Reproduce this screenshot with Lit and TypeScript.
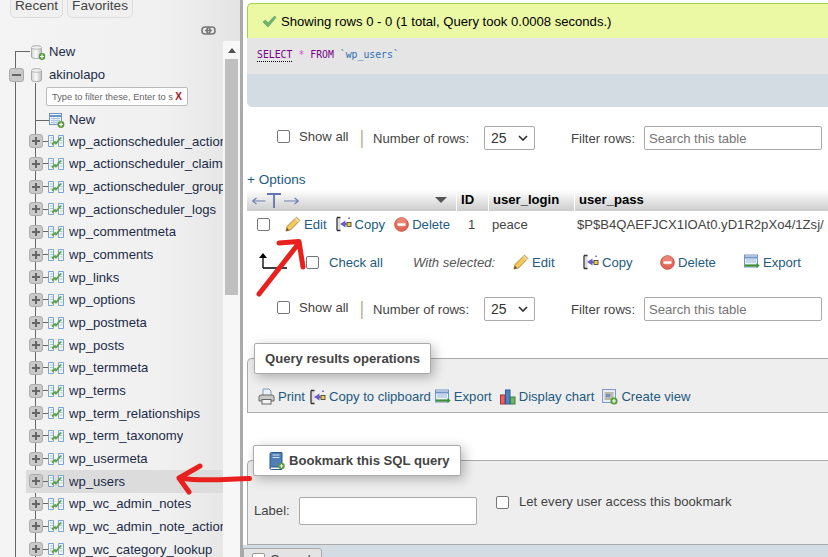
import { LitElement, html, css } from "lit";
import { customElement } from "lit/decorators.js";

const TABLES = [
  "wp_actionscheduler_actions", "wp_actionscheduler_claims", "wp_actionscheduler_groups",
  "wp_actionscheduler_logs", "wp_commentmeta", "wp_comments", "wp_links", "wp_options",
  "wp_postmeta", "wp_posts", "wp_termmeta", "wp_terms", "wp_term_relationships",
  "wp_term_taxonomy", "wp_usermeta", "wp_users", "wp_wc_admin_notes",
  "wp_wc_admin_note_actions", "wp_wc_category_lookup",
];

const db = (add = false) => html`<svg width="16" height="16" viewBox="0 0 16 16"><defs><linearGradient id="dbg"><stop offset="0" stop-color="#d4d4d4"/><stop offset=".45" stop-color="#fbfbfb"/><stop offset="1" stop-color="#bcbcbc"/></linearGradient></defs><path d="M1.500 3.500C1.500 1.500 11.500 1.500 11.500 3.500V13C11.500 15 1.500 15 1.500 13Z" fill="url(#dbg)" stroke="#aaa"/><ellipse cx="6.500" cy="3.500" rx="5" ry="1.800" fill="#f2f2f2" stroke="#b5b5b5"/>${add ? html`<svg x="8.500" y="9" width="7" height="7" viewBox="0 0 7 7"><circle cx="3.500" cy="3.500" r="3.400" fill="#5a9a3c"/><path d="M3.500 1.500v4M1.500 3.500h4" stroke="#fff" stroke-width="1.200"/></svg>` : ""}</svg>`;

const tableNew = () => html`<svg width="16" height="16" viewBox="0 0 16 16"><rect x=".5" y="1.500" width="12" height="11" fill="#eef3fa" stroke="#6e94c8"/><path d="M.5 4h12" stroke="#6e94c8" stroke-width="2"/><path d="M2 6.500h9M2 8.500h9M2 10.500h9" stroke="#a9bddb"/><path d="M5 5v7M8.500 5v7" stroke="#c3d2e8"/><circle cx="12" cy="12.500" r="3.400" fill="#5a9a3c"/><path d="M12 10.500v4M10 12.500h4" stroke="#fff" stroke-width="1.200"/></svg>`;

const tableIcon = () => html`<svg width="16" height="14" viewBox="0 0 16 14"><path d="M.5 1.500h5v11h-5Z" fill="#f4f8fd" stroke="#7aa3d6"/><path d="M10.500 1.500h5v11h-5Z" fill="#f4f8fd" stroke="#7aa3d6"/><path d="M2 4h3M2 6.500h3M2 9h3M12 4h2.500M12 6.500h2.500M12 9h2.500" stroke="#a9c9b0"/><path d="M4 10.500l3-2.500 1 1.500 5-6" fill="none" stroke="#5b9f48" stroke-width="1.800"/></svg>`;

const pencil = () => html`<svg width="16" height="16" viewBox="0 0 16 16"><path d="M1 15l1-4.500L11.500 1.200l3.300 3.300L5.500 14Z" fill="#f3c95a" stroke="#b07c2a" stroke-width=".9"/><path d="M10.500 2.200l3.300 3.300" stroke="#e9e2c8" stroke-width="1.500"/><path d="M1 15l1-3 2 2Z" fill="#5c4630"/></svg>`;

const copy = () => html`<svg width="16" height="16" viewBox="0 0 16 16"><rect x="1.500" y="2" width="3" height="12" fill="#ddd"/><path d="M1 1.500h3.500M1 1.500v13M1 14.500h3.500" fill="none" stroke="#333" stroke-width="1.300"/><path d="M9.500 4.500v7L4 8Z" fill="#6a5acd"/><rect x="7" y="7" width="3.500" height="2.200" fill="#6a5acd"/><rect x="11" y="6.500" width="4" height="4" fill="#f5d33c" stroke="#333" stroke-width=".8"/><rect x="12.300" y="1.500" width="1.500" height="1.500" fill="#5a55c8"/></svg>`;

const del = () => html`<svg width="15" height="15" viewBox="0 0 15 15"><circle cx="7.500" cy="7.500" r="6.800" fill="#e2675a" stroke="#c9523f"/><circle cx="7.500" cy="5.500" r="5" fill="#f09a8c" opacity=".55"/><rect x="3.500" y="6.300" width="8" height="2.500" fill="#fff"/></svg>`;

const exportIcon = () => html`<svg width="16" height="16" viewBox="0 0 16 16"><rect x=".5" y="1" width="13" height="12" fill="#eef3fa" stroke="#6e94c8"/><path d="M.5 3.500h13" stroke="#6e94c8" stroke-width="2"/><path d="M2 6h10M2 8h10" stroke="#9db7d8"/><path d="M1 11.500h12" stroke="#3f8f37" stroke-width="2.200"/><path d="M12.500 9l3.300 2.500-3.300 2.500Z" fill="#3f8f37"/></svg>`;

const printIcon = () => html`<svg width="17" height="17" viewBox="0 0 17 17"><path d="M5 1h6l2 2v6H5Z" fill="#eaf1fb" stroke="#7d9cc5"/><path d="M1 9q0-2 2-2h11q2 0 2 2v4H1Z" fill="#c9c9c9" stroke="#666"/><rect x="4" y="11.500" width="9" height="4.500" fill="#f4f4f4" stroke="#666"/></svg>`;

const chart = () => html`<svg width="16" height="16" viewBox="0 0 16 16"><rect x=".5" y="6" width="4.500" height="9" fill="#e8615e" stroke="#a33"/><rect x="5.500" y="1" width="4.500" height="14" fill="#4f81c9" stroke="#2e5a9c"/><rect x="10.500" y="8" width="4.500" height="7" fill="#6cb66a" stroke="#3d7f3b"/></svg>`;

const viewIcon = () => html`<svg width="16" height="16" viewBox="0 0 16 16"><rect x=".5" y=".5" width="13" height="13" fill="#e7edf6" stroke="#7d9cc5"/><rect x="2.500" y="3" width="9" height="8" fill="#b9b9a9"/><rect x="4" y="5" width="4" height="3" fill="#6f8fbf"/><circle cx="12" cy="12" r="3.600" fill="#5a9a3c"/><path d="M12 10v4M10 12h4" stroke="#fff" stroke-width="1.200"/></svg>`;

const bookmark = () => html`<svg width="16" height="18" viewBox="0 0 16 18"><path d="M1 2q0-1.500 1.500-1.500H13V15H2.500Q1 15 1 16.500Z" fill="#4f7fb5" stroke="#2f5b8c"/><path d="M3.500 3h7M3.500 5.500h7" stroke="#cfe0f2"/><path d="M1 16.500q0 1 1.500 1H13" fill="none" stroke="#2f5b8c"/><circle cx="12.500" cy="14" r="3.300" fill="#5a9a3c"/><path d="M12.500 12.200v3.600M10.700 14h3.600" stroke="#fff"/></svg>`;

const check = () => html`<svg width="15" height="13" viewBox="0 0 15 13"><path d="M1 7l2.500-2 2.500 3L12.500 1 14 2.500 6 12Z" fill="#6cb36c" stroke="#5b9e5b" stroke-width=".6"/></svg>`;

@customElement("app-root")
export class AppRoot extends LitElement {
  static styles = css`
    :host { display: block; width: 828px; height: 557px; overflow: hidden; position: relative;
      font-family: "Liberation Sans", Arial, sans-serif; font-size: 13.100px; color: #444; background: #fff; }
    * { box-sizing: border-box; }
    .page { display: flex; height: 557px; }
    .side { width: 240px; flex: none; display: flex; flex-direction: column; overflow: hidden;
      background: linear-gradient(90deg, #f4f4f4, #f0f0f0 70%, #e4e4e4); color: #1b2b47; }
    .split { width: 3px; flex: none; background: #aaa; }
    .main { width: 585px; flex: none; padding-left: 4px; display: flex; flex-direction: column; position: relative; overflow: hidden; }
    .main > * { flex: none; }

    .tabs { display: flex; gap: 4px; height: 18px; padding-left: 10px; align-items: flex-end; flex: none; }
    .tab { height: 24px; border: 1px solid #ddd; border-radius: 0 0 5px 5px; padding: 0 4px 6px; line-height: 11px;
      background: #f0f0f0; color: #444; font-size: 13.600px; display: flex; align-items: flex-end; }
    .chain { height: 23px; display: flex; justify-content: flex-end; padding: 8px 24px 0 0; flex: none; }
    .tree { flex: 1; display: flex; min-height: 0; }
    .list { width: 223px; position: relative; flex: none; }
    .list::before { content: ""; position: absolute; left: 15px; top: 10px; bottom: 0; width: 1px; background: #666; }
    .list::after { content: ""; position: absolute; left: 35px; top: 42px; bottom: 0; width: 1px; background: #666; }
    .scroll { width: 17px; background: #f7f7f7; position: relative; padding: 0 2px; flex: none; }
    .scroll .up { width: 0; height: 0; margin: 7px auto 0; border: 4px solid transparent; border-top: 0; border-bottom: 5px solid #505050; }
    .scroll .thumb { width: 13px; height: 236px; background: #bfbfbf; margin-top: 6px; }
    .root-row { height: 23px; display: flex; align-items: center; position: relative; padding-left: 30px; gap: 3px; z-index: 1; margin-top: -1px; margin-bottom: 1px; }
    .root-row .link { position: absolute; left: 15px; width: 15px; top: 11px; height: 1px; background: #666; }
    .box { position: absolute; left: 9px; top: 5px; width: 15px; height: 14px; border-radius: 3px; background: #c9c9c9; border: 1px solid #aaa; }
    .box::before { content: ""; position: absolute; left: 2px; right: 2px; top: 5px; height: 2px; background: #666; }
    .filter-row { height: 22px; padding-left: 46px; position: relative; z-index: 1; }
    .filter { width: 142px; height: 19px; background: #fff; border: 1px solid #bbb; border-radius: 2px; display: flex;
      align-items: center; justify-content: space-between; padding: 0 5px; font-size: 9.300px; color: #666; white-space: nowrap; }
    .filter b { color: #a11; font-size: 10px; }
    .new-row { height: 21px; display: flex; align-items: center; padding-left: 49px; gap: 4px; position: relative; z-index: 1; }
    .new-row .link { position: absolute; left: 35px; width: 14px; top: 11px; height: 1px; background: #666; }
    .row { height: 22.670px; display: flex; align-items: center; padding-left: 3px; margin-left: 26px; gap: 5px; position: relative; z-index: 1; white-space: nowrap; overflow: hidden; }
    .row.on { background: #dcdcdc; }
    .row span.t { overflow: hidden; }
    .exp { width: 14px; height: 14px; flex: none; border-radius: 3px; background: #c9c9c9; border: 1px solid #adadad; position: relative; }
    .exp::before { content: ""; position: absolute; left: 2px; right: 2px; top: 5px; height: 2px; background: #666; }
    .exp::after { content: ""; position: absolute; top: 2px; bottom: 2px; left: 5px; width: 2px; background: #666; }
    .dash { width: 5px; height: 1px; background: #666; flex: none; margin: 0 -5px; }
    .row svg { flex: none; }

    .ok { margin-top: 3px; height: 35px; background: #ebf8a4; border: 1px solid #a2d246; border-bottom: 0; border-right: 0;
      border-radius: 5px 0 0 0; display: flex; align-items: center; padding-left: 14px; gap: 4px; color: #000; }
    .sql { height: 36px; background: #e5e5e5; padding: 11px 0 0 10px; font-family: "DejaVu Sans Mono", "Liberation Mono", monospace; font-size: 9.800px; }
    .kw { color: #770088; }
    .kw.u { border-bottom: 1px dotted #000; padding-bottom: 1px; }
    .star { color: #d34fc9; margin: 0 6px; }
    .tick { color: #2f6fb5; }
    .sqlbar { height: 33px; background: #d3dce3; border-radius: 0 0 0 5px; }

    .nav { height: 24px; display: flex; align-items: center; padding-left: 30px; position: relative; }
    .nav.a { margin-top: 19px; }
    .nav.b { margin-top: 22px; }
    .cb { width: 13px; height: 13px; flex: none; border: 1px solid #767676; border-radius: 2px; background: #fff; }
    .nav .cb { margin-top: -3px; }
    .nav .showall { margin: -4px 0 0 9px; width: 62px; }
    .nav .sep { width: 2px; height: 18px; flex: none; background: linear-gradient(90deg, #eab676 50%, #b5cfe8 50%); margin-top: 2px; margin-right: 10px; }
    .nav .rows { width: 111px; }
    .sel { width: 51px; height: 24px; border: 1px solid #aaa; border-radius: 2px; background: #fff; display: flex; align-items: center; justify-content: space-between; padding: 0 6px; color: #333; font-size: 14px; }
    .nav .flt { margin-left: 36px; width: 73px; }
    .search { width: 178px; height: 24px; border: 1px solid #aaa; border-radius: 2px; padding-left: 4px; display: flex; align-items: center; color: #757575; }

    .opts { margin-top: 21px; height: 17px; line-height: 17px; color: #235a81; font-size: 13.600px; }
    .thead, .tbody { display: grid; grid-template-columns: 209px 32px 86px 1fr; }
    .thead { margin-top: 2px; height: 21px; background: linear-gradient(#fff, #ccc); color: #000; font-weight: bold; font-size: 13.100px; line-height: 20px; }
    .thead > div { border-left: 1px solid #fff; padding-left: 4px; }
    .thead > div:first-child { border: 0; padding: 0; position: relative; }
    .tbody { height: 26px; align-items: center; color: #444; }
    .tbody > div { padding-left: 4px; }
    .tbody > div:nth-child(2) { padding-left: 12px; }
    .tbody > div:nth-child(4) { padding-left: 3px; white-space: nowrap; }
    .acts { display: flex; align-items: center; padding-left: 10px !important; }
    .act { display: inline-flex; align-items: center; gap: 3px; color: #235a81; white-space: nowrap; }
    .acts .cb { margin-right: 15px; }
    .acts .act { margin-right: 9px; }
    .arrows { padding: 3px 0 0 5px; }
    .arrows svg { display: block; }
    .tri { position: absolute; left: 188px; top: 7px; width: 0; height: 0; border: 6px solid transparent; border-top: 6px solid #555; border-bottom: 0; }

    .bulk { margin-top: 12px; height: 26px; display: flex; align-items: center; position: relative; white-space: nowrap; }
    .bulk .cb { margin-left: 59px; }
    .bulk .ca { margin-left: 10px; width: 84px; color: #235a81; }
    .bulk i { width: 100px; color: #555; }
    .bulk .m1 { width: 70px; }
    .bulk .m2 { width: 77px; }
    .bulk .m3 { width: 84px; }

    .fs { background: #eee; border: 1px solid #aaa; border-right: 0; border-radius: 5px 0 0 0; position: relative; }
    .fs.q { margin-top: 37px; height: 55px; padding: 22px 0 0 10px; display: flex; align-items: center; white-space: nowrap; }
    .legend { position: absolute; background: #fff; border: 1px solid #aaa; box-shadow: 3px 3px 12px rgba(0,0,0,.28); border-radius: 2px; font-weight: bold; color: #444; display: flex; align-items: center; white-space: nowrap; }
    .fs.q .legend { left: 6px; top: -16px; width: 177px; height: 31px; padding-left: 10px; }
    .fs.k { margin-top: 47px; height: 85px; }
    .fs.k .legend { left: 5px; top: -16px; width: 208px; height: 31px; padding-left: 15px; gap: 4px; }
    .form { display: flex; padding: 36px 0 0 6px; }
    .form label { width: 45px; padding-top: 6px; }
    .input { width: 178px; height: 28px; background: #fff; border: 1px solid #aaa; border-radius: 2px; }
    .form .cb { margin: -1px 10px 0 19px; }
    .form .every { margin-top: -3px; }
    .console { height: 12px; background: #d3dce3; margin-left: -4px; padding-top: 3px; overflow: hidden; }
    .console div { width: 79px; height: 20px; background: #e4e4e4; border: 1px solid #aaa; border-radius: 0 3px 0 0; padding: 4px 0 0 8px; display: flex; gap: 5px; line-height: 13px; }
    .console .cb { border-color: #999; }

    .ml5 { margin-left: 5px; }
    .ml4 { margin-left: 4px; }
    .ml8 { margin-left: 8px; }
    .ink { position: absolute; inset: 0; pointer-events: none; z-index: 5; }
  `;

  private nav(cls: string) {
    return html`<div class="nav ${cls}">
      <div class="cb"></div><div class="showall">Show all</div><div class="sep"></div>
      <div class="rows">Number of rows:</div>
      <div class="sel">25 <svg width="10" height="6" viewBox="0 0 10 6"><path d="M1 1l4 4 4-4" fill="none" stroke="#333" stroke-width="1.700"/></svg></div>
      <div class="flt">Filter rows:</div>
      <div class="search">Search this table</div>
    </div>`;
  }

  render() {
    return html`<div class="page">
      <aside class="side">
        <div class="tabs"><div class="tab">Recent</div><div class="tab">Favorites</div></div>
        <div class="chain"><svg width="15" height="9" viewBox="0 0 15 9"><rect x="1" y="1" width="8" height="7" rx="3" fill="none" stroke="#777" stroke-width="1.600"/><rect x="6" y="1" width="8" height="7" rx="3" fill="none" stroke="#777" stroke-width="1.600"/><path d="M4 4.500h7" stroke="#777" stroke-width="1.400"/></svg></div>
        <div class="tree">
          <div class="list">
            <div class="root-row"><div class="link"></div>${db(true)}<span>New</span></div>
            <div class="root-row"><div class="box"></div>${db()}<span>akinolapo</span></div>
            <div class="filter-row"><div class="filter"><span>Type to filter these, Enter to s</span><b>X</b></div></div>
            <div class="new-row"><div class="link"></div>${tableNew()}<span>New</span></div>
            ${TABLES.map(t => html`<div class="row ${t === "wp_users" ? "on" : ""}"><div class="exp"></div><div class="dash"></div>${tableIcon()}<span class="t">${t}</span></div>`)}
          </div>
          <div class="scroll"><div class="up"></div><div class="thumb"></div></div>
        </div>
      </aside>
      <div class="split"></div>
      <main class="main">
        <div class="ok">${check()}<span>Showing rows 0 - 0 (1 total, Query took 0.0008 seconds.)</span></div>
        <div class="sql"><span class="kw u">SELECT</span><span class="star">*</span><span class="kw">FROM</span> <span class="tick">\`wp_users\`</span></div>
        <div class="sqlbar"></div>
        ${this.nav("a")}
        <div class="opts">+ Options</div>
        <div class="thead">
          <div><div class="arrows"><svg width="47" height="15" viewBox="0 0 47 15"><path d="M0.500 8h13M0.500 8l4-3M0.500 8l4 3M32 8h14M46.500 8l-4-3M46.500 8l-4 3" fill="none" stroke="#6b7fb5" stroke-width="1.200"/><path d="M15 1h14M22 1v14" stroke="#5f75b0" stroke-width="1.800" fill="none"/></svg></div><div class="tri"></div></div>
          <div>ID</div><div>user_login</div><div>user_pass</div>
        </div>
        <div class="tbody">
          <div class="acts"><div class="cb"></div>
            <span class="act">${pencil()}Edit</span><span class="act">${copy()}Copy</span><span class="act">${del()}Delete</span></div>
          <div>1</div><div>peace</div><div>$P$B4QAEFJCX1IOAt0.yD1R2pXo4/1Zsj/</div>
        </div>
        <div class="bulk">
          <div class="cb"></div><div class="ca">Check all</div><i>With selected:</i>
          <span class="act m1">${pencil()}Edit</span><span class="act m2">${copy()}Copy</span><span class="act m3">${del()}Delete</span><span class="act">${exportIcon()}Export</span>
        </div>
        ${this.nav("b")}
        <div class="fs q">
          <div class="legend">Query results operations</div>
          <span class="act">${printIcon()}Print</span><span class="act ml5">${copy()}Copy to clipboard</span><span class="act ml4">${exportIcon()}Export</span><span class="act ml8">${chart()}Display chart</span><span class="act ml8">${viewIcon()}Create view</span>
        </div>
        <div class="fs k">
          <div class="legend">${bookmark()}Bookmark this SQL query</div>
          <div class="form"><label>Label:</label><div class="input"></div><div class="cb"></div><span class="every">Let every user access this bookmark</span></div>
        </div>
        <div class="console"><div><span class="cb"></span>Console</div></div>
      </main>
    </div>
    <svg class="ink" width="828" height="557" viewBox="0 0 828 557">
      <path d="M263 268V256M263 268H287" fill="none" stroke="#000" stroke-width="1.300"/><path d="M259 258l4-5 4 5Z" fill="#000"/>
      <path d="M259 294L299 243M279 243L299 241.500L303 267" fill="none" stroke="#e8211f" stroke-width="5" stroke-linecap="round" stroke-linejoin="round"/>
      <path d="M249.500 478.500C225 479 205 482 179 478M200 466L179 478L189 492" fill="none" stroke="#e8211f" stroke-width="5" stroke-linecap="round" stroke-linejoin="round"/>
    </svg>`;
  }
}
